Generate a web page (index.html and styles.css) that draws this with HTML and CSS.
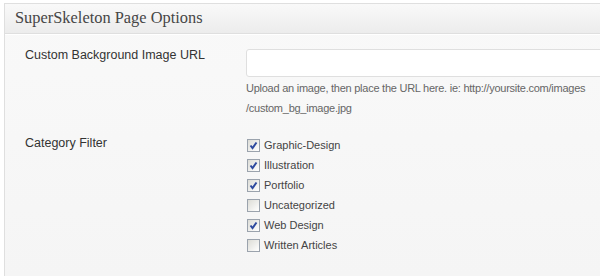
FILE: index.html
```html
<!DOCTYPE html>
<html lang="en">
<head>
    <meta charset="UTF-8">
    <title>SuperSkeleton Page Options</title>
    <link rel="stylesheet" href="styles.css">
</head>
<body>
    <div class="postbox">
        <h3>SuperSkeleton Page Options</h3>
        <div class="inside">
            <div class="option-row">
                <label class="option-label" for="bgImage">Custom Background Image URL</label>
                <div class="option-field">
                    <input type="text" id="bgImage" class="text-input">
                    <p class="description">Upload an image, then place the URL here. ie: http://yoursite.com/images<br>/custom_bg_image.jpg</p>
                </div>
            </div>

            <div class="option-row">
                <div class="option-label">Category Filter</div>
                <ul class="check-list">
                    <li><span class="check-box checked"><svg viewBox="0 0 11 11"><path d="M2.5 5.5 L4.5 8 L8.5 2.5"/></svg></span>Graphic-Design</li>
                    <li><span class="check-box checked"><svg viewBox="0 0 11 11"><path d="M2.5 5.5 L4.5 8 L8.5 2.5"/></svg></span>Illustration</li>
                    <li><span class="check-box checked"><svg viewBox="0 0 11 11"><path d="M2.5 5.5 L4.5 8 L8.5 2.5"/></svg></span>Portfolio</li>
                    <li><span class="check-box"></span>Uncategorized</li>
                    <li><span class="check-box checked"><svg viewBox="0 0 11 11"><path d="M2.5 5.5 L4.5 8 L8.5 2.5"/></svg></span>Web Design</li>
                    <li><span class="check-box"></span>Written Articles</li>
                </ul>
            </div>
        </div>
    </div>
</body>
</html>
```

FILE: styles.css
```css
* {
    margin: 0;
    padding: 0;
    box-sizing: border-box;
}

html, body {
    height: 100%;
    overflow: hidden;
}

body {
    font-family: "Liberation Sans", Arial, sans-serif;
    background-color: #ffffff;
    color: #333;
}

.postbox {
    height: calc(100% - 3px);
    margin: 3px 0 0 4px;
    border: 1px solid #dfdfdf;
    border-right: none;
    border-bottom: none;
    background: linear-gradient(to bottom, #f9f9f9, #f5f5f5);
    overflow: hidden;
}

h3 {
    height: 30px;
    line-height: 28px;
    padding-left: 10px;
    font-family: "Liberation Serif", Georgia, serif;
    font-size: 16.4px;
    font-weight: normal;
    color: #464646;
    background: linear-gradient(to bottom, #f9f9f9, #ececec);
    border-bottom: 1px solid #dfdfdf;
    box-shadow: 0 1px 0 #ffffff;
}

.inside {
    padding: 11px 0 0 20px;
}

.option-row {
    display: flex;
    margin-bottom: 15px;
}

.option-label {
    width: 221px;
    flex-shrink: 0;
    font-size: 12.5px;
    line-height: 20px;
    color: #333;
}

.option-field {
    flex: 1;
    padding-top: 4px;
}

.text-input {
    display: block;
    width: 400px;
    height: 28px;
    border: 1px solid #dfdfdf;
    border-radius: 3px;
    background-color: #ffffff;
}

.description {
    margin-top: 1px;
    font-size: 11px;
    letter-spacing: -0.25px;
    line-height: 20px;
    color: #666;
    white-space: nowrap;
}

.check-list {
    list-style: none;
    padding-top: 2px;
}

.check-list li {
    display: flex;
    align-items: center;
    height: 20px;
    font-size: 11px;
    color: #444;
}

.check-box {
    width: 13px;
    height: 13px;
    margin: 0 4px 0 1px;
    border: 1px solid #9ba3ad;
    background: linear-gradient(to bottom right, #dcdcd6, #ffffff);
}

.check-box svg {
    display: block;
    width: 11px;
    height: 11px;
}

.check-box path {
    fill: none;
    stroke: #2e4a9e;
    stroke-width: 2;
}
```
